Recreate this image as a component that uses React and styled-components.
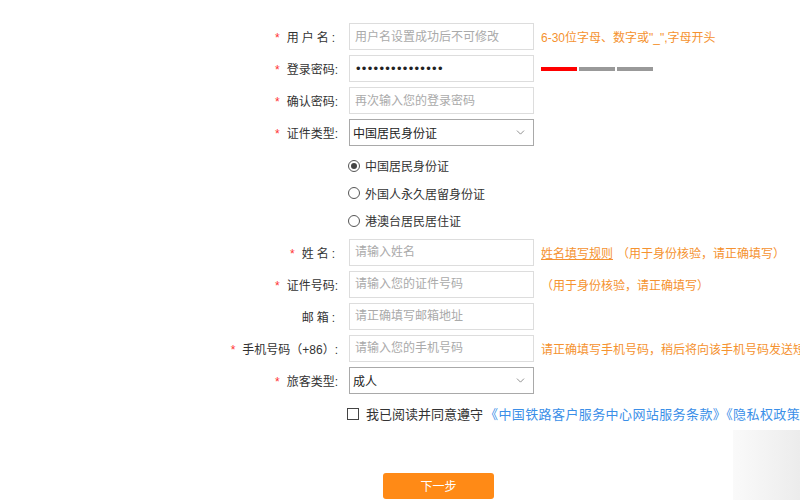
import React from 'react'
import styled, { createGlobalStyle } from 'styled-components'
import { ChevronDown } from 'lucide-react'

const GlobalStyle = createGlobalStyle`
  html, body {
    margin: 0;
    padding: 0;
    background: #fff;
    overflow: hidden;
  }
  body {
    font-family: "Liberation Sans", "Noto Sans CJK SC", sans-serif;
    font-size: 12px;
    color: #333;
  }
`

const Page = styled.div`
  position: relative;
  width: 800px;
  height: 500px;
  overflow: hidden;
  padding-top: 23px;
  box-sizing: border-box;
`

const Row = styled.div`
  display: flex;
  align-items: center;
  height: 27px;
  margin-bottom: ${p => (p.$last ? '0' : '5px')};
  white-space: nowrap;
`

const Label = styled.div`
  flex: 0 0 349px;
  box-sizing: border-box;
  padding-right: 11px;
  text-align: right;
  font-size: 12px;
  color: #333;
  letter-spacing: ${p => (p.$spaced ? '3px' : '0')};
`

const Star = styled.span`
  color: #f33;
  margin-right: 7px;
  letter-spacing: 0;
`

const Input = styled.input`
  flex: 0 0 185px;
  width: 185px;
  height: 27px;
  box-sizing: border-box;
  border: 1px solid #ddd;
  padding: 0 5px;
  font-family: inherit;
  font-size: 12px;
  color: #333;
  outline: none;
  &::placeholder {
    color: #aaa;
  }
`

const Dots = styled.div`
  flex: 0 0 185px;
  height: 27px;
  box-sizing: border-box;
  border: 1px solid #ddd;
  padding: 0 6px;
  display: flex;
  align-items: center;
  font-size: 13px;
  letter-spacing: 1.3px;
  color: #222;
`

const Select = styled.div`
  flex: 0 0 185px;
  height: 27px;
  box-sizing: border-box;
  border: 1px solid #a9a9a9;
  padding: 0 6px 0 3px;
  display: flex;
  align-items: center;
  justify-content: space-between;
  font-size: 12px;
  color: #222;
  svg {
    color: #777;
  }
`

const Hint = styled.div`
  margin-left: 7px;
  color: #f5922f;
  font-size: 12px;
`

const RuleLink = styled.span`
  text-decoration: underline;
  margin-right: 4px;
`

const Strength = styled.div`
  margin-left: 7px;
  display: flex;
  gap: 2px;
`

const Bar = styled.div`
  width: 36px;
  height: 4px;
  background: ${p => (p.$on ? '#f00' : '#999')};
`

const RadioGroup = styled.div`
  padding: 6px 0 4px 348px;
`

const RadioRow = styled.label`
  display: flex;
  align-items: center;
  height: 27.5px;
  font-size: 12px;
  color: #333;
`

const RadioDot = styled.span`
  width: 10px;
  height: 10px;
  border: 1px solid #555;
  border-radius: 50%;
  margin-right: 5px;
  display: flex;
  align-items: center;
  justify-content: center;
  &::after {
    content: '';
    width: 6px;
    height: 6px;
    border-radius: 50%;
    background: ${p => (p.$checked ? '#444' : 'transparent')};
  }
`

const AgreeRow = styled.div`
  display: flex;
  align-items: center;
  height: 20px;
  margin-top: 10px;
  padding-left: 347px;
  white-space: nowrap;
  font-size: 13px;
  color: #333;
`

const Box = styled.span`
  width: 10px;
  height: 10px;
  border: 1px solid #444;
  margin-right: 7px;
  flex-shrink: 0;
`

const Terms = styled.span`
  color: #3b8fe8;
  margin-left: 2px;
  letter-spacing: 0.4px;
`

const NextButton = styled.button`
  display: block;
  margin: 49px 0 0 383px;
  width: 111px;
  height: 26px;
  border: none;
  border-radius: 3px;
  background: #ff8a16;
  color: #fff;
  font-family: inherit;
  font-size: 12px;
  cursor: pointer;
`

const Shade = styled.div`
  position: absolute;
  left: 733px;
  top: 430px;
  width: 67px;
  height: 70px;
  background: linear-gradient(to right, #fafafa, #ececec);
`

export default function App() {
  return (
    <Page>
      <GlobalStyle />
      <Row>
        <Label $spaced><Star>*</Star>用户名:</Label>
        <Input placeholder="用户名设置成功后不可修改" />
        <Hint>6-30位字母、数字或"_",字母开头</Hint>
      </Row>
      <Row>
        <Label><Star>*</Star>登录密码:</Label>
        <Dots>•••••••••••••••</Dots>
        <Strength>
          <Bar $on />
          <Bar />
          <Bar />
        </Strength>
      </Row>
      <Row>
        <Label><Star>*</Star>确认密码:</Label>
        <Input placeholder="再次输入您的登录密码" />
      </Row>
      <Row $last>
        <Label><Star>*</Star>证件类型:</Label>
        <Select>
          <span>中国居民身份证</span>
          <ChevronDown size={13} strokeWidth={1.5} />
        </Select>
      </Row>
      <RadioGroup>
        <RadioRow><RadioDot $checked />中国居民身份证</RadioRow>
        <RadioRow><RadioDot />外国人永久居留身份证</RadioRow>
        <RadioRow><RadioDot />港澳台居民居住证</RadioRow>
      </RadioGroup>
      <Row>
        <Label $spaced><Star>*</Star>姓名:</Label>
        <Input placeholder="请输入姓名" />
        <Hint><RuleLink>姓名填写规则</RuleLink>（用于身份核验，请正确填写）</Hint>
      </Row>
      <Row>
        <Label><Star>*</Star>证件号码:</Label>
        <Input placeholder="请输入您的证件号码" />
        <Hint>（用于身份核验，请正确填写）</Hint>
      </Row>
      <Row>
        <Label $spaced>邮箱:</Label>
        <Input placeholder="请正确填写邮箱地址" />
      </Row>
      <Row>
        <Label><Star>*</Star>手机号码（+86）:</Label>
        <Input placeholder="请输入您的手机号码" />
        <Hint>请正确填写手机号码，稍后将向该手机号码发送短信验证码</Hint>
      </Row>
      <Row>
        <Label><Star>*</Star>旅客类型:</Label>
        <Select>
          <span>成人</span>
          <ChevronDown size={13} strokeWidth={1.5} />
        </Select>
      </Row>
      <AgreeRow>
        <Box />
        我已阅读并同意遵守
        <Terms>《中国铁路客户服务中心网站服务条款》《隐私权政策》</Terms>
      </AgreeRow>
      <NextButton>下一步</NextButton>
      <Shade />
    </Page>
  )
}
